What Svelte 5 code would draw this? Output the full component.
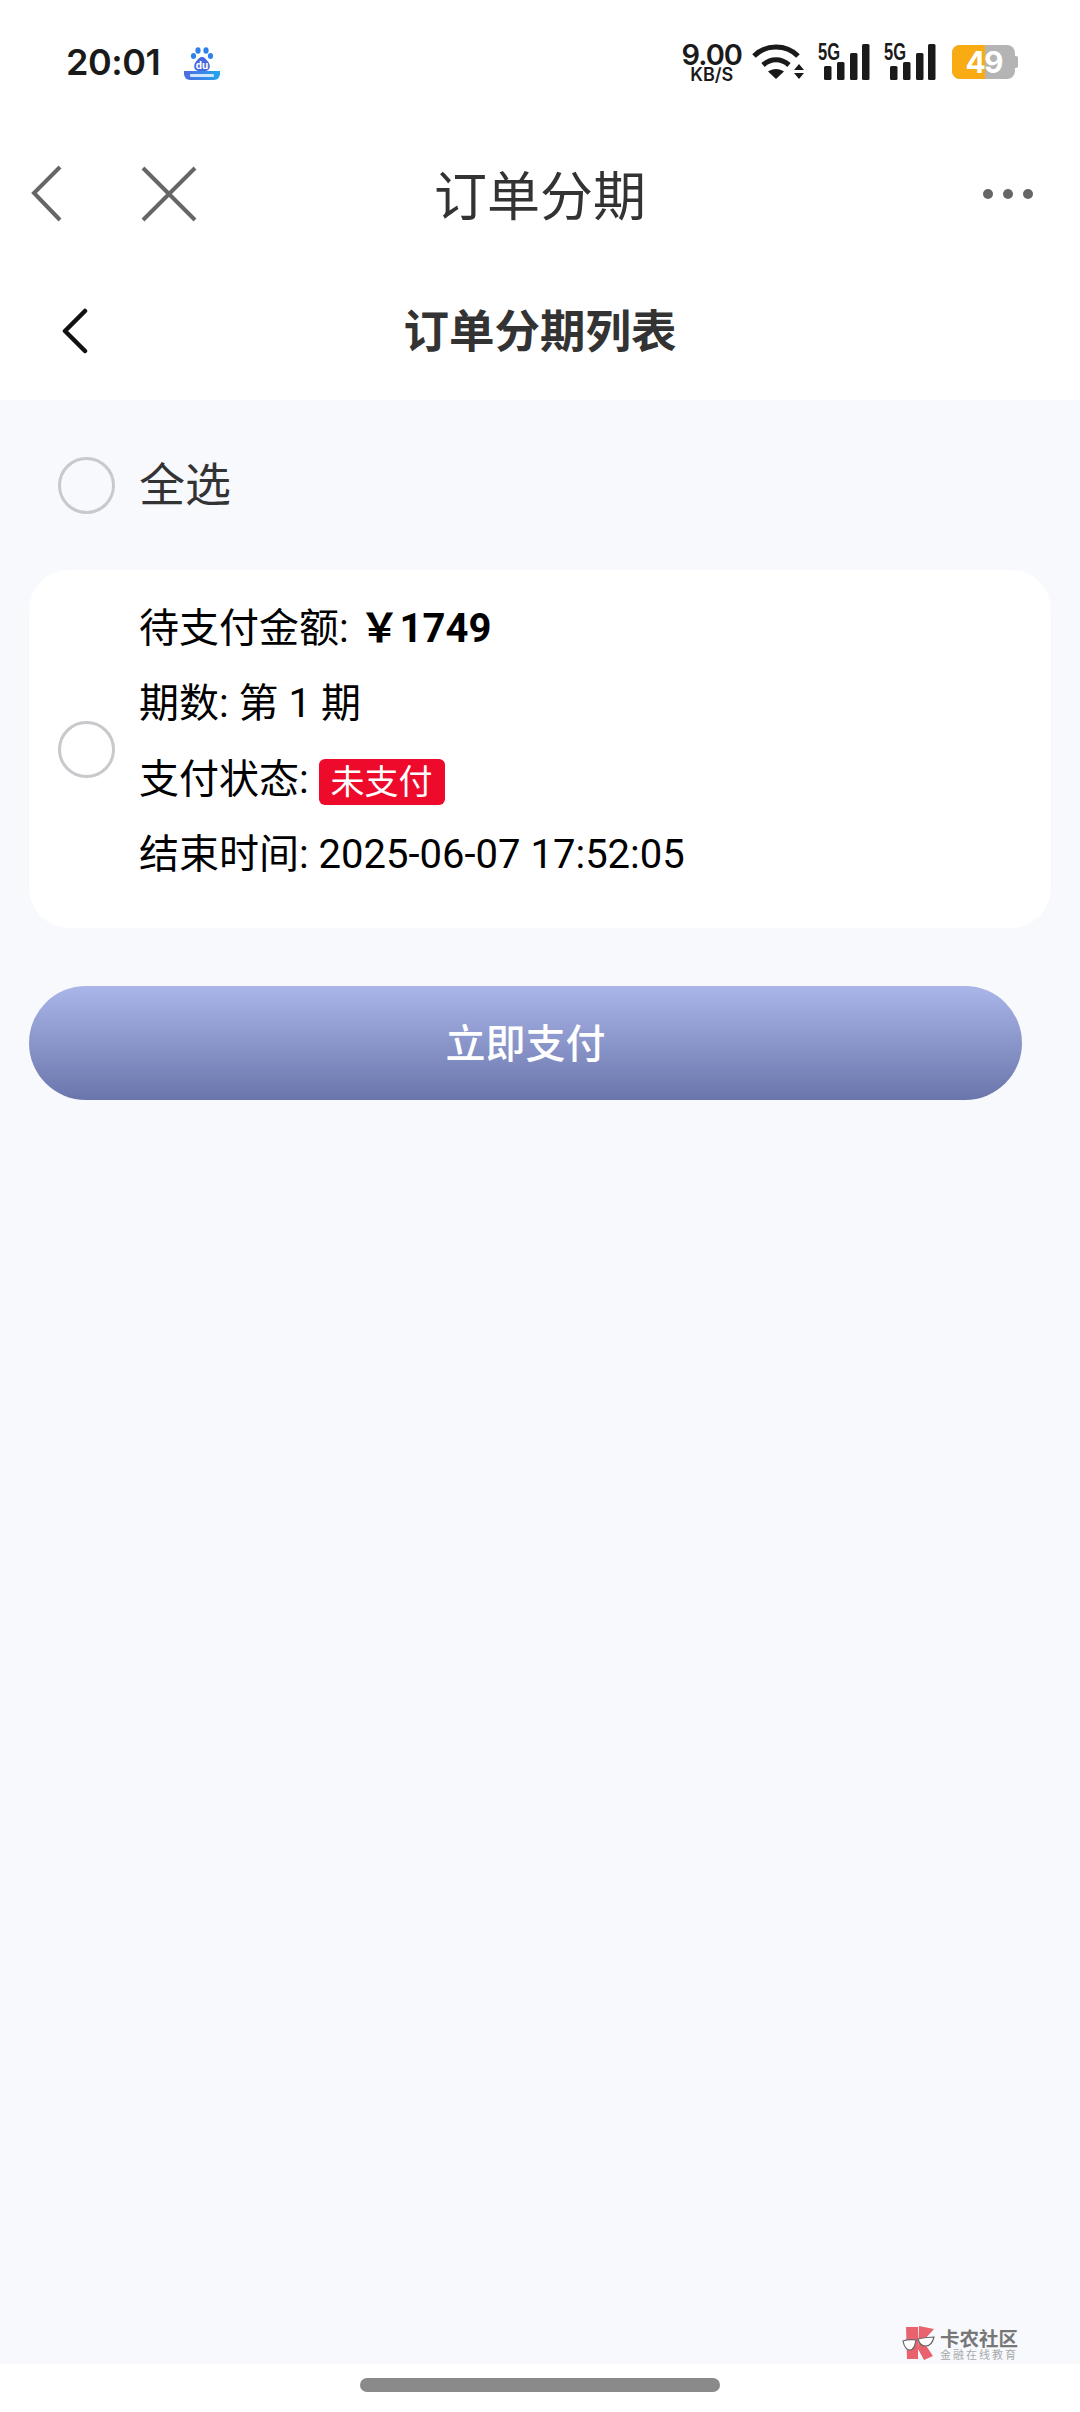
<script>
	const rows = [
		{ label: '期数:', value: '第 1 期' },
	];
	const signalBars = [
		{ x: 6, y: 23, h: 14 },
		{ x: 19, y: 19, h: 18 },
		{ x: 32, y: 10, h: 27 },
		{ x: 44, y: 1, h: 36 },
	];
</script>

{#snippet signal()}
	<svg class="signal" width="52" height="38" viewBox="0 0 52 38" aria-hidden="true">
		<text x="0" y="17" class="five-g" textLength="22" lengthAdjust="spacingAndGlyphs">5G</text>
		{#each signalBars as bar}
			<rect x={bar.x} y={bar.y} width="7.5" height={bar.h} rx="1.5" fill="#1a1a1a" />
		{/each}
	</svg>
{/snippet}

<div class="page">
	<!-- system status bar -->
	<div class="status">
		<div class="status-left">
			<span class="time">20:01</span>
			<svg class="baidu" width="36" height="36" viewBox="0 0 36 36" aria-hidden="true">
				<defs>
					<linearGradient id="band" x1="0" x2="1" y1="0" y2="0">
						<stop offset="0" stop-color="#4f6be0" />
						<stop offset="1" stop-color="#22a5ee" />
					</linearGradient>
				</defs>
				<rect width="36" height="36" rx="7" fill="#fff" />
				<path d="M0 27h36v3a6 6 0 0 1-6 6H6a6 6 0 0 1-6-6z" fill="url(#band)" />
				<rect x="6" y="30" width="24" height="3" rx="1" fill="#cfe6fb" />
				<g fill="#2f80ec">
					<ellipse cx="9.500" cy="12" rx="2.600" ry="3" />
					<ellipse cx="14" cy="6.500" rx="2.600" ry="3.200" />
					<ellipse cx="22" cy="6.500" rx="2.600" ry="3.200" />
					<ellipse cx="26.500" cy="12" rx="2.600" ry="3" />
				</g>
				<path d="M18 13c3 0 4 2.500 6 4.500 2.500 2.500 3 9.500-3 9.500h-6c-6 0-5.500-7-3-9.500 2-2 3-4.500 6-4.500z" fill="#4668dd" />
				<text x="18" y="25" class="du">du</text>
			</svg>
		</div>
		<div class="status-right">
			<div class="speed">
				<span class="speed-num">9.00</span>
				<span class="speed-unit">KB/S</span>
			</div>
			<svg class="wifi" width="52" height="36" viewBox="0 0 52 36" aria-hidden="true">
				<g fill="none" stroke="#1a1a1a" stroke-width="5">
					<path d="M2 12C14 0 34 0 46 12" />
					<path d="M11 21c8-7 18-7 26 0" />
				</g>
				<path d="M24 35l-8-7.500c4.500-3.500 11.500-3.500 16 0z" fill="#1a1a1a" />
				<path d="M47 20l5 6h-10zM47 35l-5-6h10z" fill="#1a1a1a" />
			</svg>
			{@render signal()}
			{@render signal()}
			<div class="battery">
				<div class="battery-body">
					<span class="battery-fill"></span>
					<span class="battery-num">49</span>
				</div>
				<span class="battery-tip"></span>
			</div>
		</div>
	</div>

	<!-- webview nav -->
	<div class="nav">
		<div class="nav-left">
			<svg width="32" height="58" viewBox="0 0 32 58" fill="none" stroke="#666" stroke-width="4" aria-hidden="true">
				<path d="M29 2L3 28l26 27" />
			</svg>
			<svg width="56" height="56" viewBox="0 0 56 56" fill="none" stroke="#666" stroke-width="4" aria-hidden="true">
				<path d="M2 2l52 52M54 2L2 54" />
			</svg>
		</div>
		<div class="nav-title">订单分期</div>
		<div class="nav-more">
			<i></i><i></i><i></i>
		</div>
	</div>

	<!-- page header -->
	<div class="subhead">
		<svg class="sub-back" width="30" height="46" viewBox="0 0 30 46" fill="none" stroke="#111" stroke-width="4.500" stroke-linecap="round" stroke-linejoin="round" aria-hidden="true">
			<path d="M25 3L5 23l20 20" />
		</svg>
		<div class="sub-title">订单分期列表</div>
	</div>

	<main class="content">
		<div class="select-all">
			<span class="radio"></span>
			<span class="all-label">全选</span>
		</div>

		<div class="card">
			<span class="radio"></span>
			<div class="info">
				<div class="row">待支付金额: <b class="price">￥1749</b></div>
				{#each rows as row}
					<div class="row">{row.label} {row.value}</div>
				{/each}
				<div class="row">支付状态: <span class="badge">未支付</span></div>
				<div class="row">结束时间: 2025-06-07 17:52:05</div>
			</div>
		</div>

		<button class="pay">立即支付</button>

		<div class="watermark">
			<svg width="34" height="35" viewBox="0 0 34 35" aria-hidden="true">
				<path d="M5 1h12v32H6zM18 0l15 3-11 12 10 15-9 4-6-11z" fill="#e8636e" />
				<g fill="#fff" stroke="#666" stroke-width="1.200">
					<path d="M2 15c4-1.500 9-1.500 13-1-1 5-2 10-6 10-4 0-6-4-7-9z" />
					<path d="M17 13c5-1 11-2 16-2-1 4-3 9-8 9-4 0-7-3-8-7z" />
				</g>
			</svg>
			<div class="mark-text">
				<span class="mark-name">卡农社区</span>
				<span class="mark-sub">金融在线教育</span>
			</div>
		</div>
	</main>

	<div class="home">
		<span class="home-bar"></span>
	</div>
</div>

<style>
	:global(body) {
		margin: 0;
		background: #fff;
	}
	.page {
		width: 1080px;
		height: 2412px;
		display: flex;
		flex-direction: column;
		font-family: Roboto, "Noto Sans CJK SC", sans-serif;
		color: #000;
		overflow: hidden;
	}

	.status {
		height: 124px;
		flex: none;
		display: flex;
		align-items: center;
		justify-content: space-between;
		padding: 0 62px 0 66px;
		box-sizing: border-box;
	}
	.status-left {
		display: flex;
		align-items: center;
		gap: 24px;
	}
	.time {
		font-family: Inter, sans-serif;
		font-size: 36px;
		font-weight: 600;
		color: #1a1a1a;
		letter-spacing: -0.5px;
	}
	.du {
		font-family: Roboto, sans-serif;
		font-size: 11px;
		font-weight: 700;
		fill: #fff;
		text-anchor: middle;
	}
	.status-right {
		display: flex;
		align-items: center;
		gap: 14px;
	}
	.speed {
		display: flex;
		flex-direction: column;
		align-items: center;
		font-family: Inter, sans-serif;
		color: #1a1a1a;
		margin-right: -4px;
	}
	.speed-num {
		font-size: 29px;
		font-weight: 600;
		line-height: 24px;
		letter-spacing: -1px;
	}
	.speed-unit {
		font-size: 18px;
		font-weight: 600;
		line-height: 15px;
	}
	.signal {
		overflow: visible;
	}
	.five-g {
		font-family: "Liberation Sans", sans-serif;
		font-size: 23px;
		font-weight: 700;
		fill: #1a1a1a;
	}
	.battery {
		display: flex;
		align-items: center;
		margin-left: 2px;
	}
	.battery-body {
		position: relative;
		width: 63px;
		height: 34px;
		border-radius: 8px;
		background: #b4b4b4;
		display: flex;
		align-items: center;
		justify-content: center;
	}
	.battery-fill {
		position: absolute;
		left: 0;
		top: 0;
		bottom: 0;
		width: 33px;
		border-radius: 8px 0 0 8px;
		background: #f8ab13;
	}
	.battery-num {
		position: relative;
		font-family: Inter, sans-serif;
		font-size: 30px;
		font-weight: 700;
		letter-spacing: -2px;
		color: #fff;
	}
	.battery-tip {
		width: 3px;
		height: 12px;
		border-radius: 0 2px 2px 0;
		background: #b4b4b4;
	}

	.nav {
		height: 140px;
		flex: none;
		display: grid;
		grid-template-columns: 1fr auto 1fr;
		align-items: center;
		padding: 0 31px;
	}
	.nav-left {
		display: flex;
		align-items: center;
		gap: 78px;
	}
	.nav-title {
		font-family: "Noto Sans CJK SC", sans-serif;
		font-size: 53px;
		color: #333;
		line-height: 1;
		padding-bottom: 2px;
	}
	.nav-more {
		display: flex;
		justify-content: flex-end;
		gap: 10px;
		padding-right: 16px;
	}
	.nav-more i {
		width: 10px;
		height: 10px;
		border-radius: 50%;
		background: #666;
	}

	.subhead {
		height: 136px;
		flex: none;
		display: flex;
		align-items: center;
		justify-content: center;
		position: relative;
	}
	.sub-back {
		position: absolute;
		left: 60px;
		top: 44px;
	}
	.sub-title {
		font-family: "Noto Sans CJK SC", sans-serif;
		font-size: 45.500px;
		font-weight: 700;
		color: #333;
		line-height: 1;
		padding-bottom: 6px;
	}

	.content {
		flex: 1;
		background: #f7f9fd;
		display: flex;
		flex-direction: column;
		padding: 0 29px;
		font-family: Roboto, "Noto Sans CJK SC", sans-serif;
	}
	.select-all {
		height: 170px;
		flex: none;
		display: flex;
		align-items: center;
		gap: 24px;
		padding-left: 29px;
		font-size: 46px;
		color: #333;
	}
	.all-label {
		padding-bottom: 8px;
	}
	.radio {
		width: 57px;
		height: 57px;
		flex: none;
		box-sizing: border-box;
		border: 3px solid #c8c9cc;
		border-radius: 50%;
	}
	.card {
		height: 358px;
		flex: none;
		box-sizing: border-box;
		width: 1022px;
		background: #fff;
		border-radius: 40px;
		display: flex;
		align-items: center;
		gap: 24px;
		padding-left: 29px;
	}
	.info {
		display: flex;
		flex-direction: column;
		padding-bottom: 15px;
	}
	.row {
		font-size: 40px;
		line-height: 75.500px;
		height: 75.500px;
		white-space: nowrap;
	}
	.price {
		font-weight: 700;
		margin-left: 1px;
	}
	.badge {
		display: inline-block;
		background: #ee0a2b;
		color: #fff;
		border-radius: 6px;
		padding: 0 12px;
		line-height: 46px;
		vertical-align: -1px;
		font-size: 34px;
	}
	.pay {
		width: 993px;
		height: 114px;
		flex: none;
		margin-top: 58px;
		border: 0;
		border-radius: 57px;
		background: linear-gradient(180deg, #aab6e9 0%, #6a76ab 100%);
		color: #fff;
		font-family: "Noto Sans CJK SC", sans-serif;
		font-size: 40px;
		font-weight: 500;
		padding: 0 0 5px;
	}
	.watermark {
		margin-top: auto;
		margin-bottom: 3px;
		align-self: flex-end;
		margin-right: 33px;
		display: flex;
		align-items: center;
		gap: 5px;
	}
	.mark-text {
		display: flex;
		flex-direction: column;
	}
	.mark-name {
		font-family: "Noto Sans CJK SC", sans-serif;
		font-size: 19.500px;
		font-weight: 700;
		color: #777;
		line-height: 21px;
	}
	.mark-sub {
		font-family: "Noto Sans CJK SC", sans-serif;
		font-size: 11px;
		color: #aaa;
		letter-spacing: 2px;
		line-height: 13px;
	}

	.home {
		height: 48px;
		flex: none;
		display: flex;
		justify-content: center;
		padding-top: 14px;
		box-sizing: border-box;
		background: #fff;
	}
	.home-bar {
		width: 360px;
		height: 14px;
		border-radius: 7px;
		background: #8a8a8a;
	}
</style>
